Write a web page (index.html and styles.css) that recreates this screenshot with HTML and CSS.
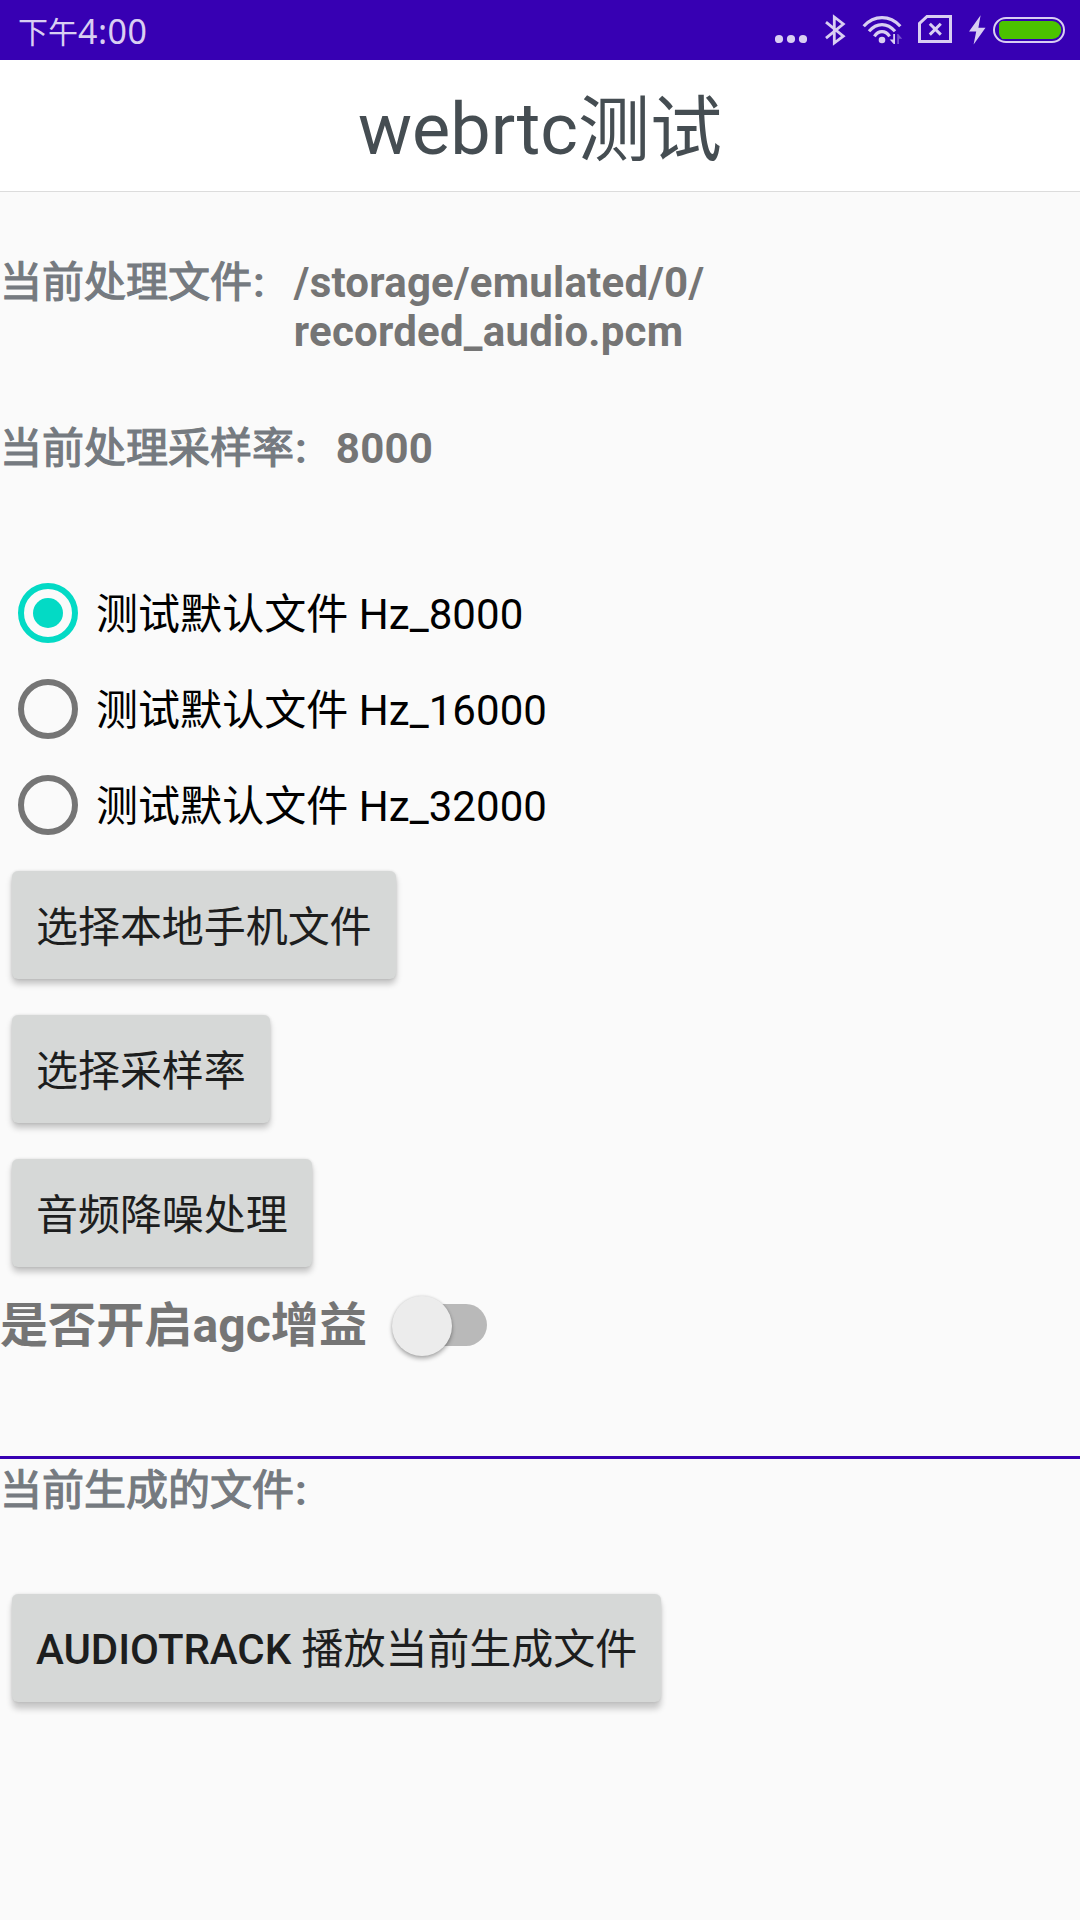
FILE: index.html
```html
<!DOCTYPE html>
<html lang="zh-CN">
<head>
<meta charset="utf-8">
<title>webrtc测试</title>
<link rel="stylesheet" href="styles.css">
</head>
<body>
<header class="status">
  <div class="clock"><span class="period">下午</span><span class="time">4:00</span></div>
  <div class="icons">
    <svg class="dots" width="32" height="60" viewBox="775 0 32 60"><g fill="#d9cef2"><circle cx="779" cy="39" r="4.1"/><circle cx="791" cy="39" r="4.1"/><circle cx="803" cy="39" r="4.1"/></g></svg>
    <svg class="bluetooth" width="22" height="60" viewBox="824 0 22 60"><path d="M826 22.2 843.3 36.2 834.3 43V17L843.3 24 826 38.2" fill="none" stroke="#d9cef2" stroke-width="2.8"/></svg>
    <svg class="wifi" width="40" height="60" viewBox="862 0 40 60"><g fill="none" stroke="#d9cef2" stroke-width="3.2"><path d="M863.7 26.2Q871.5 17.6 882 17.6T900.3 26.2"/><path d="M869 31.3Q874.8 24.6 882 24.6T895 31.3"/><path d="M874.4 36.3Q877.5 31.6 882 31.6T889.6 36.3"/></g><circle cx="882" cy="40" r="3.3" fill="#d9cef2"/><path d="M893.2 34h1.8v10h-1.3l-4-4.6h3.5z" fill="#d9cef2"/><path d="M897.2 44V34h1l4 4.8H899V44z" fill="#7550cc"/></svg>
    <svg class="sim" width="34" height="60" viewBox="918 0 34 60"><path d="M927 16.5H950.5V41.5H919.5V23.5ZM929.8 23.8 940.8 34.6M940.8 23.8 929.8 34.6" fill="none" stroke="#d9cef2" stroke-width="3"/></svg>
    <svg class="bolt" width="18" height="60" viewBox="968 0 18 60"><path d="M980.6 15.2 969 31.5H976.2L973.6 44.5 985.5 27.8H978.4Z" fill="#d9cef2"/></svg>
    <svg class="battery" width="72" height="60" viewBox="993 0 72 60"><rect x="994" y="18" width="70" height="24" rx="12" fill="none" stroke="#d9cef2" stroke-width="2"/><path d="M1002 21H1052.3A9 9 0 0 1 1052.3 39H1002Q999 36 999 33V24Q999 22.5 1002 21Z" fill="#4bc300"/></svg>
  </div>
</header>
<h1 class="title">webrtc<span class="han">测试</span></h1>
<main>
  <div class="info file"><span class="label">当前处理文件<b>:</b></span><span class="value">/storage/emulated/0/<br>recorded_audio.pcm</span></div>
  <div class="info rate"><span class="label">当前处理采样率<b>:</b></span><span class="value">8000</span></div>
  <div class="radios">
    <div class="radio checked"><i class="ring"></i><span>测试默认文件 Hz_8000</span></div>
    <div class="radio"><i class="ring"></i><span>测试默认文件 Hz_16000</span></div>
    <div class="radio"><i class="ring"></i><span>测试默认文件 Hz_32000</span></div>
  </div>
  <div class="buttons">
    <button class="button">选择本地手机文件</button>
    <button class="button">选择采样率</button>
    <button class="button">音频降噪处理</button>
  </div>
  <div class="agc"><span class="agc-text">是否开启agc增益</span><div class="switch"><i class="thumb"></i></div></div>
  <section class="output">
    <div class="label">当前生成的文件<b>:</b></div>
    <button class="button play"><span class="latin">AUDIOTRACK</span> 播放当前生成文件</button>
  </section>
</main>
</body>
</html>
```
FILE: styles.css
```css
* { box-sizing: border-box; }
body {
  margin: 0;
  width: 1080px;
  height: 1920px;
  overflow: hidden;
  background: #fafafa;
  font-family: Roboto, "Noto Sans CJK SC", sans-serif;
  font-size: 42px;
  line-height: 49px;
}
.status {
  height: 60px;
  padding: 0 15px 0 18px;
  display: flex;
  justify-content: space-between;
  background: #3700b3;
  color: #d9cef2;
}
.clock { display: flex; line-height: 60px; font-size: 30px; }
.period { font-family: "Noto Sans CJK SC", sans-serif; }
.time { padding-top: 1px; font-family: "Noto Sans", sans-serif; font-size: 34px; letter-spacing: .5px; }
.icons { display: flex; }
.icons svg { display: block; }
.bluetooth { margin-left: 17px; }
.wifi { margin-left: 16px; }
.sim { margin-left: 16px; }
.bolt { margin-left: 16px; }
.battery { margin-left: 7px; }
.title {
  margin: 0;
  height: 132px;
  padding-top: 27px;
  border-bottom: 1px solid #dcdcdc;
  background: #fff;
  color: #454d52;
  font-size: 72px;
  font-weight: 400;
  line-height: 85px;
  text-align: center;
}
.han { vertical-align: -1px; line-height: 1; }
.info { display: flex; gap: 29px; }
.file { margin-top: 66px; height: 98px; }
.rate { margin-top: 68px; }
.label {
  color: #757a80;
  white-space: nowrap;
  -webkit-text-stroke: 1.2px #757a80;
}
.label b { margin-left: 1px; -webkit-text-stroke: 0; }
.value { color: #757575; font-weight: 700; letter-spacing: .22px; }
.radios { margin-top: 92px; color: #000; }
.radio { display: flex; align-items: center; height: 96px; padding-left: 18px; gap: 18px; }
.radio span { padding-top: 3px; letter-spacing: .05px; }
.ring {
  display: flex;
  width: 60px;
  height: 60px;
  border: 6px solid #757575;
  border-radius: 50%;
}
.checked .ring { border-color: #03dac5; }
.checked .ring::before {
  content: "";
  margin: auto;
  width: 30px;
  height: 30px;
  border-radius: 50%;
  background: #03dac5;
}
.buttons {
  display: flex;
  flex-direction: column;
  align-items: flex-start;
  gap: 36px;
  padding: 18px 12px 0;
}
.button {
  display: block;
  height: 108px;
  padding: 5px 24px 0 24px;
  border: 0;
  border-radius: 6px;
  background: #d6d8d7;
  color: #1d1e1e;
  font: 400 42px/49px Roboto, "Noto Sans CJK SC", sans-serif;
  letter-spacing: -.06px;
  box-shadow: 0 5px 6px rgba(0, 0, 0, .22), 0 0 3px rgba(0, 0, 0, .12);
  white-space: nowrap;
}
.agc { display: flex; height: 60px; margin-top: 28px; }
.agc-text {
  padding-top: 2px;
  color: #757575;
  font-size: 48px;
  font-weight: 700;
  line-height: 57px;
  letter-spacing: .1px;
}
.switch {
  display: flex;
  align-items: center;
  width: 83px;
  height: 42px;
  margin: 9px 0 0 37px;
  border-radius: 21px;
  background: #b9b9b9;
}
.thumb {
  flex: none;
  width: 60px;
  height: 60px;
  margin: 1px 0 0 -12px;
  border-radius: 50%;
  background: #ececec;
  box-shadow: 0 3px 4px rgba(0, 0, 0, .28), 0 0 3px rgba(0, 0, 0, .15);
}
.output { margin-top: 101px; border-top: 3px solid #3700b3; padding: 7px 0 0; }
.play {
  margin: 79px 0 0 12px;
  padding-top: 3px;
  box-shadow: 0 7px 6px rgba(0, 0, 0, .2), 0 0 3px rgba(0, 0, 0, .12);
}
.latin { font-weight: 500; }
```
